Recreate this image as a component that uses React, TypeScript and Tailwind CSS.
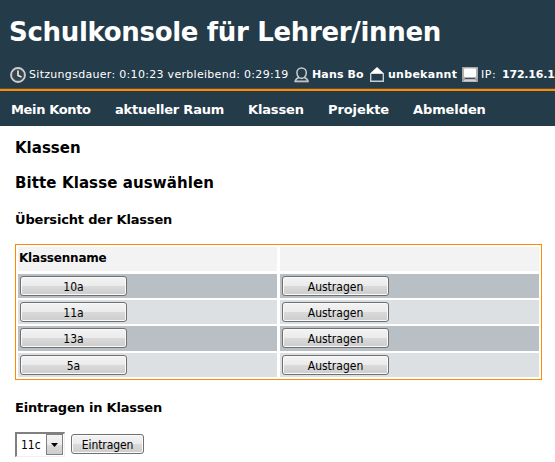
import React from "react";

const verdana = "font-['DejaVu_Sans',Verdana,sans-serif]";
const buttonFace =
  "block h-5 rounded-[3px] border border-[#707070] bg-[linear-gradient(to_bottom,#f3f3f3_0%,#ebebeb_50%,#dadada_51%,#cdcdcd_100%)] text-center font-['DejaVu_Sans_Condensed',Tahoma,sans-serif] text-[12px] leading-[21px] text-black shadow-[inset_0_0_0_1px_#fafafa]";

const rows = [
  { name: "10a", cell: "h-6 bg-[#b8c0c6]" },
  { name: "11a", cell: "h-6 bg-[#dce0e3]" },
  { name: "13a", cell: "h-[25px] bg-[#b8c0c6]" },
  { name: "5a", cell: "h-6 bg-[#dce0e3]" },
];

function ClockIcon() {
  return (
    <svg className="block" width="16" height="16" viewBox="0 0 16 16" fill="none">
      <circle cx="8" cy="8" r="7" fill="#35434d" stroke="#d2d0cf" strokeWidth="1.8" />
      <circle cx="8" cy="8" r="5.7" stroke="#5d666c" strokeWidth=".8" />
      <path d="M8 3.5V8.5L11.5 10" stroke="#eee" strokeWidth="1.6" />
    </svg>
  );
}

function UserIcon() {
  return (
    <svg className="block" width="16" height="16" viewBox="0 0 16 16" fill="none" stroke="#c9cccd" strokeWidth="1.5">
      <path d="M5 10.500C3.600 9.400 2.900 7.700 2.900 5.800a4.700 4.900 0 0 1 9.400 0c0 1.900-.7 3.600-2.100 4.700" />
      <path d="M5 10.500C6.500 11.500 8.700 11.500 10.200 10.500M5 10.500C3 11.200 1.600 12.200 1.200 14.200H14C13.600 12.200 12.200 11.200 10.200 10.500" />
      <path d="M.5 15.300H14.700" stroke="#847f7d" strokeWidth=".8" />
    </svg>
  );
}

function HouseIcon() {
  return (
    <svg className="block" width="16" height="16" viewBox="0 0 16 16" fill="none">
      <path d="M1.700 6.500V14.300H14.300V6.500" stroke="#c8ced2" strokeWidth="1.400" />
      <path d="M8 0L15 6.500H1Z" fill="#fff" />
      <path d="M1.500 6.500H14.500" stroke="#d8dcde" />
    </svg>
  );
}

function MonitorIcon() {
  return (
    <svg className="block" width="16" height="16" viewBox="0 0 16 16">
      <rect width="16" height="15" fill="#9c9c9c" />
      <rect x=".5" y=".5" width="15" height="11" fill="#b3b3b3" />
      <rect x="2" y="1.500" width="12" height="8.500" rx="1" fill="#fff" />
      <path d="M3 11H13V12H3Z" fill="#465057" />
      <path d="M1 14.500L3 12.500H13L15 14.500Z" fill="#d4d4d4" />
    </svg>
  );
}

export default function App() {
  return (
    <div className={`h-[462px] w-[555px] overflow-hidden bg-white text-black ${verdana}`}>
      <header className="h-[126px] bg-[#243b4a] text-white">
        <div className="h-[91px] overflow-hidden border-b-2 border-[#ff8c00] shadow-[inset_0_-1px_0_#53504a]">
          <h1 className="h-[67px] pt-[14px] pl-[9px] text-[26px] leading-[36px] font-bold tracking-[-0.32px] whitespace-nowrap">
            Schulkonsole für Lehrer/innen
          </h1>
          <div className="flex h-4 items-start pl-[10px] text-[11px] leading-4 whitespace-nowrap *:shrink-0">
            <span className="w-[19px]"><ClockIcon /></span>
            <span className="w-[265px] tracking-[0.3px]">Sitzungsdauer: 0:10:23 verbleibend: 0:29:19</span>
            <span className="w-[18px]"><UserIcon /></span>
            <b className="w-[57px] tracking-[0.15px]">Hans Bo</b>
            <span className="w-[19px]"><HouseIcon /></span>
            <b className="w-[74px] tracking-[0.28px]">unbekannt</b>
            <span className="w-[19px]"><MonitorIcon /></span>
            <span className="w-[21px] tracking-[0.5px]">IP:</span>
            <b className="tracking-[-0.2px]">172.16.1</b>
          </div>
        </div>
        <nav className="flex h-[35px] pl-[11px] text-[13px] leading-[37px] font-bold whitespace-nowrap">
          <span className="w-[104px] tracking-[-0.36px]">Mein Konto</span>
          <span className="w-[133px] tracking-[-0.2px]">aktueller Raum</span>
          <span className="w-[80px] tracking-[-0.15px]">Klassen</span>
          <span className="w-[85px] tracking-[-0.1px]">Projekte</span>
          <span className="tracking-[-0.1px]">Abmelden</span>
        </nav>
      </header>

      <main className="pl-[15px]">
        <h2 className="pt-3 text-[15px] leading-5 font-bold">Klassen</h2>
        <h2 className="pt-[15px] text-[15px] leading-5 font-bold tracking-[0.1px]">Bitte Klasse auswählen</h2>
        <h3 className="pt-[18px] text-[13px] leading-[18px] font-bold tracking-[-0.18px]">Übersicht der Klassen</h3>

        <div className="mt-[15px] h-[136px] w-[527px] border border-[#ff8c00] p-[2px] pb-px">
          <div className="mb-[3px] grid h-6 grid-cols-[259px_259px] gap-[3px]">
            <div className="bg-[#f3f3f3] pl-px text-[12px] leading-[22px] font-bold tracking-[-0.2px]">Klassenname</div>
            <div className="bg-[#f3f3f3]" />
          </div>
          <div className="flex flex-col gap-[2px]">
            {rows.map((row) => (
              <div key={row.name} className="grid grid-cols-[259px_259px] gap-[3px]">
                <div className={`${row.cell} pt-[2px] pl-[2px]`}>
                  <button className={`${buttonFace} w-[107px]`}>{row.name}</button>
                </div>
                <div className={`${row.cell} pt-[2px] pl-[2px]`}>
                  <button className={`${buttonFace} w-[107px]`}>Austragen</button>
                </div>
              </div>
            ))}
          </div>
        </div>

        <h3 className="pt-[19px] text-[13px] leading-[18px] font-bold tracking-[-0.2px]">Eintragen in Klassen</h3>
        <div className="mt-[15px] flex gap-[6px]">
          <div className="flex h-[25px] w-[50px] border-t-2 border-r border-b border-l-2 border-[#808080] border-r-[#f0f0f0] border-b-[#f0f0f0] bg-white">
            <span className="w-[29px] pl-[4px] font-['DejaVu_Sans_Condensed',Tahoma,sans-serif] text-[12px] leading-[22px]">11c</span>
            <span className="flex h-[21px] w-[17px] items-center justify-center border border-[#808080] bg-[linear-gradient(to_bottom,#f3f3f3_0%,#ebebeb_50%,#dadada_51%,#cdcdcd_100%)]">
              <svg width="7" height="4" viewBox="0 0 7 4"><path d="M0 0H7L3.500 4Z" /></svg>
            </span>
          </div>
          <button className={`${buttonFace} mt-[2px] w-[73px] tracking-[-0.1px]`}>Eintragen</button>
        </div>
      </main>
    </div>
  );
}
